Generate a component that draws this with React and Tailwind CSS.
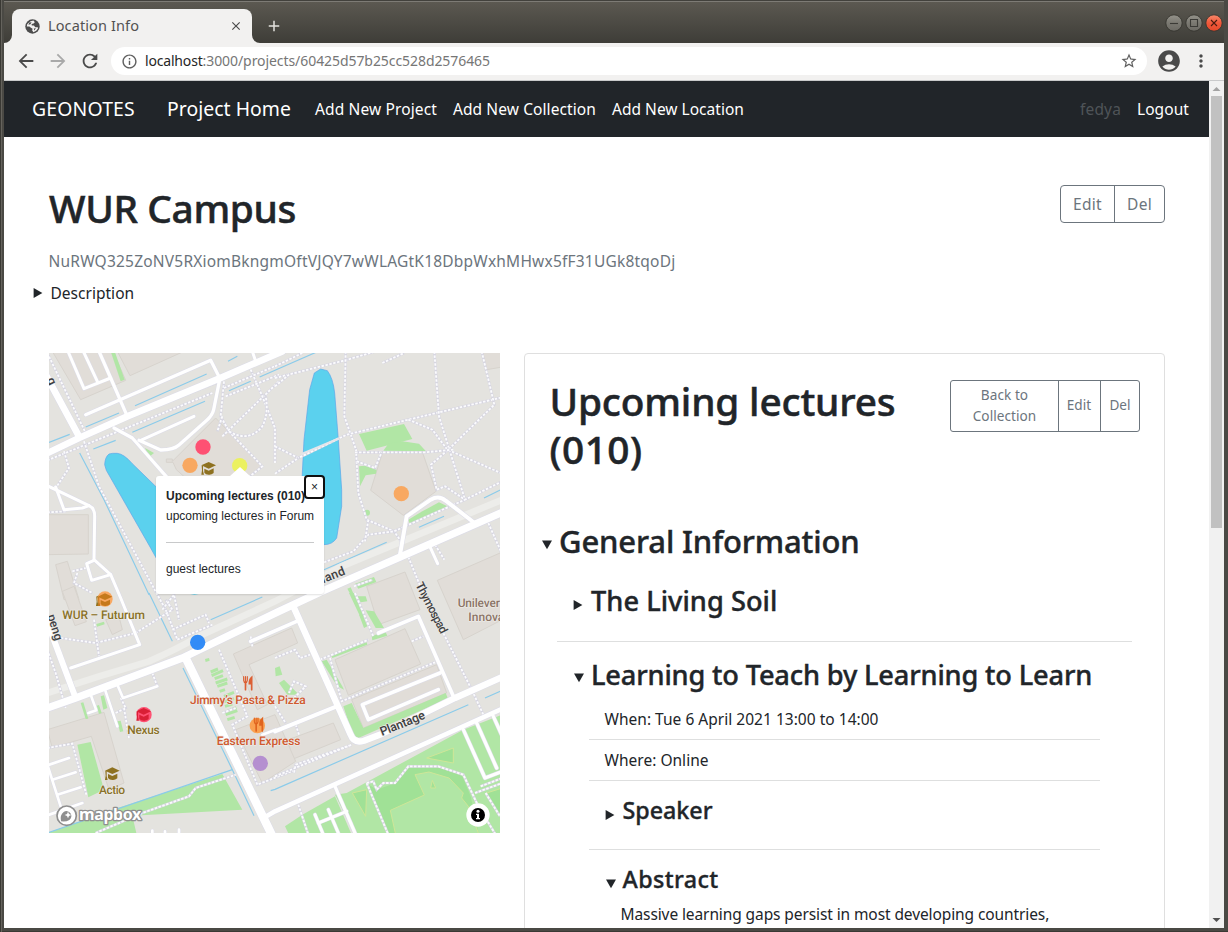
import React from 'react';
import {
  MdArrowBack, MdArrowForward, MdRefresh, MdInfoOutline, MdStarBorder,
  MdAccountCircle, MdMoreVert, MdClose, MdAdd,
} from 'react-icons/md';

/* Map data: three units per screen pixel. */
const BUILDINGS = [
  '10,-5 95,140 230,82 192,-5', '205,-5 243,68 405,-5', '370,325 500,195 640,340 600,375 410,375 382,350 372,328 352,328 352,318 370,318',
  '-5,485 118,485 118,603 -5,605', '20,635 55,625 90,740 45,740', '1000,300 1121,300 1161,415 1063,487 965,412',
  '1300,-5 1313,50 1360,42 1360,-5', '1165,682 1360,597 1360,800 1243,860', '858,920 1068,827 1115,933 898,1027',
  '953,700 1068,657 1113,770 988,815', '908,1040 1163,935 1193,1020 943,1125', '718,1160 853,1110 875,1160 728,1220',
  '553,903 728,825 746,870 600,935 655,1055 625,1070', '560,1130 678,1085 740,1225 640,1290',
  '-5,1130 165,1078 225,1290 180,1310 127,1150 75,1165 10,1185', '40,715 78,818 112,806 75,700', '170,800 210,790 220,830 190,845',
];
const GREENS = [
  '185,-5 197,-5 227,80 215,85', '288,285 315,300 300,312', '930,243 1065,213 1090,258 953,293',
  '1003,293 1018,272 1060,265 1110,272 1131,295', '930,340 948,338 983,350 981,362 950,367 933,400',
  '1078,500 1120,475 1170,448 1195,460 1083,514', '918,692 975,672 982,687 928,707', '895,707 905,703 915,725 905,725',
  '85,1175 125,1167 165,1310 118,1333', '185,1372 520,1263 580,1370 250,1388 262,1440 -5,1440',
  '893,1320 1243,1130 1360,1085 1360,1445 918,1445 858,1325', '708,1420 760,1385 858,1330 908,1445 720,1445',
  '818,925 833,920 880,1000 885,1010 865,1000', '845,905 953,868 955,875 850,915', '968,848 1010,838 1015,848 970,862',
  '883,1060 908,1050 943,1125 1190,1020 1197,1037 928,1155 912,1148', '900,720 915,720 945,790 938,800', '930,785 940,783 955,820 945,825',
  '950,772 975,775 1005,825 980,825', '925,730 950,730 955,745 935,748', '690,990 705,980 745,1020 738,1025 715,1025', '678,945 692,940 700,965 680,970',
  '155,1030 165,1027 175,1065 163,1070', '205,1105 215,1103 223,1135 213,1137', '95,1050 103,1048 118,1097 110,1098',
  '143,1058 150,1056 158,1080 150,1083', '142,813 165,806 167,814 144,821', '468,918 480,915 482,923 470,927',
];
const GREEN_DASHES = ['485,957 507,948', '488,968 522,953', '497,977 522,968', '500,990 535,978', '505,1000 535,990', '512,1015 528,1010', '525,1030 555,1018', '520,1048 555,1037', '528,1060 550,1053', '530,1085 565,1073', '535,1100 557,1093', '535,1075 562,1064'];
const STREAMS = [
  '0,268 62,244', '110,222 210,180', '133,288 200,262', '258,158 473,63', '250,238 468,145', '92,300 165,440 300,725', '300,720 370,865',
  '537,25 565,10', '540,113 605,85', '632,72 803,-3', '825,650 1013,568', '1110,523 1185,490', '1305,435 1360,408', '485,800 640,732',
  '402,945 550,1250 615,1388', '-5,1440 550,1250', '665,1313 678,1309 1258,1055', '1308,1035 1360,1012',
];
const PATHS = [
  'M-5 0L110 240', 'M-5 322L110 275L490 120', 'M180 215L500 90', 'M105 265L150 400L325 725L350 770L385 860', 'M45 295L60 345L25 398', 'M-5 478L50 475',
  'M525 85L515 190L540 235L640 340L600 372', 'M520 250L690 85', 'M605 50L640 130L678 225V330', 'M540 235Q600 270 640 220Q660 180 650 130',
  'M530 130L690 65', 'M525 105L700 30', 'M520 190L505 235', 'M678 75L888 22L980 -5', 'M678 100L720 65', 'M678 40L760 0', 'M1000 30L1065 0',
  'M890 -5L886 190L921 290L928 420L953 500L1035 535L1060 570', 'M678 280L748 315L893 245L1078 200L1360 133', 'M678 362L748 315',
  'M1078 200L1150 230L1195 290L1360 362', 'M1156 -5L1170 190L1248 440', 'M1298 -5L1336 155L1200 288L1146 335L1163 410L1188 400L1248 440L1360 385',
  'M918 298H1128L1213 290', 'M923 325L978 345L998 298', 'M825 628L913 595L958 545L1035 535L1248 440', 'M958 500L948 565', 'M1318 510L1360 605',
  'M1078 612L1118 710L1178 830L1268 1010L1303 1085', 'M1158 575L1186 620', 'M0 850L140 870L260 840L370 770L350 740', 'M135 800L150 910', 'M340 770L375 725L390 800',
  'M385 860L490 815', 'M370 830L470 785L480 810', 'M510 890L570 1030L595 1090L550 1115L625 1295L740 1250', 'M-5 1185L70 1172L112 1325',
  'M-5 890L20 960L50 1065', 'M200 1080L230 1065L215 1035', 'M225 1065L240 1155', 'M310 960L325 1000', 'M140 1440L280 1380L420 1330L440 1305L560 1265',
  'M678 915L738 890L753 915L783 905', 'M918 720L973 850', 'M813 920L958 860', 'M843 915L878 1045L1158 928', 'M1088 865L1123 850', 'M678 1270L908 1175L740 1235L735 1260',
  'M748 1355L778 1445', 'M953 1290L1018 1445', 'M953 1290L973 1285L983 1310L1003 1290L1038 1290L1078 1240L1168 1240L1243 1265L1288 1360L1340 1445',
  'M1278 1320L1360 1290', 'M1295 1300L1360 1275', 'M1310 1320L1353 1390', 'M735 1035L770 1000L735 985L720 1020', 'M678 1060L710 1110', 'M740 1115L750 1145', 'M915 700L970 680', 'M520 1080L560 1065', 'M605 850L610 880', 'M85 660L75 690L130 720', 'M70 655L110 645',
];
/* [path, width] */
const ROADS = [
  ['M-10 303L90 255L235 190L510 77L700 -5', 20], ['M-10 65L90 250', 20], ['M150 -5L185 75L235 190', 10], ['M110 185L485 22L512 75', 10],
  ['M57 -5L105 107L185 75', 9], ['M103 -5L145 85', 9], ['M512 80L494 170Q490 188 470 205L390 276Q375 290 335 291L270 262', 10], ['M195 225L250 255L360 380', 10],
  ['M275 262L435 190', 9], ['M-5 398L120 458Q137 465 137 490L135 620L185 665L215 735L272 875L65 945', 9], ['M20 402L45 470L100 465L120 458', 9],
  ['M185 665L128 682L113 632L135 622', 9], ['M610 -5L620 25', 9], ['M-10 1067L80 1035L400 915L690 775L825 712L1360 478', 22], ['M-10 795L80 1035', 18],
  ['M410 915L668 1445', 25], ['M125 1025L142 1072L118 1080', 8], ['M168 1010L205 1120', 8], ['M205 995L222 1035L325 1000', 8],
  ['M-5 1235L35 1360', 8], ['M-5 1237L60 1215', 8], ['M10 1280L80 1258', 8], ['M25 1325L95 1303', 8], ['M-5 1387L100 1350', 8],
  ['M733 760L905 1145Q915 1172 945 1163L1000 1142L1218 1035L1360 972', 19], ['M605 865L743 805', 11], ['M988 840L1108 790L1213 1030', 11],
  ['M1173 960L940 1055L958 1100L1168 1010', 11], ['M678 1135L863 1060', 12], ['M655 1388L678 1375L1360 1067', 14], ['M858 1300L920 1445', 10],
  ['M798 1385L823 1445', 9], ['M838 1370L868 1440', 9], ['M808 1410L893 1375', 9], ['M1243 1130L1308 1275L1360 1255', 10],
  ['M1283 1110L1343 1245', 10], ['M1333 1090L1360 1150', 10], ['M1053 605L1073 490L1145 440Q1170 426 1190 443L1273 507', 12], ['M1140 575L1166 632', 9],
  ['M310 1433V1445M348 1435V1445M390 1430V1445', 8], ['M640 1145L680 1130', 8],
];
const DOTS = [
  [462, 282, '#ff4c6f'], [423, 337, '#f9a65d'], [572, 338, '#ebf25c'], [1057, 422, '#f9a65d'], [446, 868, '#2b88f7'],
  [285, 1085, '#ff4c6f'], [625, 1118, '#fb9f4c'], [634, 1231, '#b48ccf'], [168, 738, '#f9a65d'],
];

function Cap({ x, y, fill = '#8e7120' }) {
  return (
    <g transform={`translate(${x} ${y})`} fill={fill}>
      <path d="M-22 -9L0 -19L22 -9L0 1Z" />
      <path d="M-13 1L0 7L15 0V14Q8 20 0 19Q-9 19 -13 13Z" />
      <path d="M-21 -8H-17V8L-14 19H-22L-20 6Z" />
    </g>
  );
}

function Fork({ x, y, stroke = '#dc5f33' }) {
  return (
    <g transform={`translate(${x} ${y})`} fill="none" stroke={stroke} strokeLinecap="round">
      <path d="M-13 -20V-9Q-12 -2 -8 -2Q-3 -2 -2 -9V-20M-7.5 -20V-4" strokeWidth="3.5" />
      <path d="M-7.5 -2V19" strokeWidth="5" />
      <path d="M11 19V-18Q4 -12 4 1H11" strokeWidth="5" fill={stroke} />
    </g>
  );
}

function MapText({ children, fill, size = 36, ...rest }) {
  return (
    <text fill={fill} fontSize={size} stroke="#eceae6" strokeWidth="4" strokeLinejoin="round" paintOrder="stroke" textRendering="geometricPrecision" {...rest}>
      {children}
    </text>
  );
}

function CampusMap() {
  return (
    <svg className="block h-[480px] w-[451px] font-['Roboto',sans-serif] font-medium" viewBox="0 0 1353 1440">
      <rect width="1353" height="1440" fill="#e4e3df" />
      {BUILDINGS.map((p) => <polygon key={p} points={p} fill="#e1ddd8" stroke="#d7d3cd" strokeWidth="3" />)}
      {GREENS.map((p) => <polygon key={p} points={p} fill="#b1e6a5" />)}
      <circle cx="954" cy="479" r="9" fill="#b1e6a5" />
      {GREEN_DASHES.map((p) => <polyline key={p} points={p} stroke="#b1e6a5" strokeWidth="9" />)}
      <path d="M960 1295L983 1310L1040 1290L1080 1245L1170 1240L1240 1270L1265 1330L1290 1445H1015Z" fill="#a0e196" />
      <path d="M1098 1265L1140 1257L1200 1275L1243 1320L1238 1335L1258 1360L1290 1445H1040L1024 1372L1126 1326Z" fill="#b1e6a5" stroke="#cfe698" strokeWidth="3" />
      <path d="M1133 1215L1213 1185V1230Z M910 1320L953 1310L950 1390Z M1145 1305L1150 1282L1160 1305Z M1313 1320L1360 1305V1380H1345Z" fill="#a0e196" stroke="#cfe698" strokeWidth="3" />
      {STREAMS.map((p) => <polyline key={p} points={p} fill="none" stroke="#8acbea" strokeWidth="3.5" />)}
      <path d="M167 335Q168 312 180 303Q190 300 205 301Q225 303 250 332L325 405L400 490L450 720H380L305 585L172 352Z" fill="#5bd1ee" stroke="#5aa5ea" strokeWidth="2" />
      <path d="M796 60L815 48L835 53Q852 75 857 120L868 260L878 410V460L863 555Q850 575 825 575H770L758 400L765 260L782 110Z" fill="#5bd1ee" stroke="#5aa5ea" strokeWidth="2" />
      <path d="M410 715Q435 735 465 715Z" fill="#5bd1ee" />
      <path d="M-5 1020L150 970L300 925Q380 890 450 850L678 745L878 640L1360 440" fill="none" stroke="#ededea" strokeWidth="20" />
      {PATHS.map((p) => (
        <g key={p} fill="none">
          <path d={p} stroke="#d7d6e1" strokeWidth="8" />
          <path d={p} stroke="#fbfbfd" strokeWidth="5.5" strokeDasharray="7.500 4.500" />
        </g>
      ))}
      <path d="M758 303L868 257" stroke="#e5e5ea" strokeWidth="6" />
      {ROADS.map(([p, w]) => <path key={p} d={p} fill="none" stroke="#dcdce8" strokeWidth={w + 3} strokeLinecap="round" strokeLinejoin="round" />)}
      {ROADS.map(([p, w]) => <path key={`${p}f`} d={p} fill="none" stroke="#fff" strokeWidth={w} strokeLinecap="round" strokeLinejoin="round" />)}

      <Cap x={479} y={346} />
      <Cap x={163} y={740} />
      <Cap x={190} y={1262} />
      <Fork x={597} y={991} />
      {DOTS.map(([x, y, c]) => <circle key={`${x}-${y}`} cx={x} cy={y} r="23" fill={c} fillOpacity="0.97" />)}
      <Cap x={168} y={740} fill="#c5791c" />
      <Cap x={284} y={1084} fill="#d91f36" />
      <Fork x={629} y={1115} stroke="#e0641f" />

      <MapText x="40" y="798" fill="#8a7228" textLength="248">WUR – Futurum</MapText>
      <MapText x="235" y="1143" fill="#8a7228" textLength="97">Nexus</MapText>
      <MapText x="150" y="1322" fill="#8a7228" textLength="78">Actio</MapText>
      <MapText x="423" y="1054" fill="#d0592f" textLength="347">Jimmy’s Pasta &amp; Pizza</MapText>
      <MapText x="503" y="1176" fill="#d0592f" textLength="251">Eastern Express</MapText>
      <MapText x="1226" y="761" fill="#8b7466" textLength="127">Unilever</MapText>
      <MapText x="1258" y="804" fill="#8b7466" textLength="108">Innova</MapText>
      <g fill="#3f3f42">
        <MapText fill="#3f3f42" size={37} textLength="142" transform="translate(999 1149) rotate(-22)">Plantage</MapText>
        <MapText fill="#3f3f42" textLength="168" transform="translate(1099 695) rotate(63)">Thymospad</MapText>
        <MapText fill="#3f3f42" size={37} textLength="73" transform="translate(823 691) rotate(-22)">land</MapText>
        <MapText fill="#3f3f42" transform="translate(-5 788) rotate(73)">peng</MapText>
        <MapText fill="#3f3f42" transform="translate(-7 80) rotate(64)">g</MapText>
      </g>

      <g transform="translate(53 1388)">
        <circle r="29" fill="#fff" stroke="#8f8f8f" strokeWidth="5" />
        <path d="M-17 17Q-21 -2 -9 -11A14.500 14.500 0 1 1 8 13Q-2 19 -17 17Z" fill="#8f8f8f" />
        <path d="M4 -12L7 -5L14 -2L7 1L4 8L1 1L-6 -2L1 -5Z" fill="#fff" />
      </g>
      <text x="90" y="1402" fontSize="48" textLength="187" className="font-['Noto_Sans',sans-serif] font-bold" fill="#fff" stroke="#8f8f8f" strokeWidth="8" strokeLinejoin="round" paintOrder="stroke">mapbox</text>
      <circle cx="1287" cy="1386" r="35" fill="#fff" />
      <circle cx="1287" cy="1386" r="21" fill="#000" />
      <circle cx="1287" cy="1375" r="4.5" fill="#fff" />
      <path d="M1281 1382H1290V1395H1293V1399H1281V1395H1284V1386H1281Z" fill="#fff" />
    </svg>
  );
}

function Popup() {
  return (
    <div className="absolute top-[114px] left-[107px] w-[168px] font-['Liberation_Sans',Arial,sans-serif] text-[12px] leading-5 text-[#212529]">
      <svg className="mx-auto block h-[9px] w-5" viewBox="0 0 20 9"><path d="M10 0L20 9H0Z" fill="#fff" /></svg>
      <div className="h-[118px] rounded-[3px] bg-white px-[10px] pt-[10px] shadow-[0_1px_2px_rgba(0,0,0,0.12)]">
        <div className="font-bold whitespace-nowrap tracking-[-0.02px]">Upcoming lectures (010)</div>
        <div className="whitespace-nowrap">upcoming lectures in Forum</div>
        <div className="my-4 h-px bg-[#c8c9ca]" />
        <div>guest lectures</div>
      </div>
      <button className="absolute top-[8px] right-[-1px] flex h-6 w-[21px] items-center justify-center rounded-[4px] border-2 border-[#101010] bg-white text-[12px] leading-none">×</button>
    </div>
  );
}

function Caret({ open, className = '' }) {
  return (
    <svg className={`h-[10px] w-[10px] shrink-0 ${className}`} viewBox="0 0 10 10">
      <path d={open ? 'M0 0.5H10L5 9.3Z' : 'M0.6 0V10L9.4 5Z'} fill="#212529" />
    </svg>
  );
}

function WindowButton({ kind }) {
  const close = kind === 'close';
  return (
    <svg className="h-[18px] w-[18px]" viewBox="0 0 18 18">
      <defs>
        <linearGradient id={`wb-${kind}`} x1="0" y1="0" x2="0" y2="1">
          <stop offset="0" stopColor={close ? '#f8896b' : '#94928a'} />
          <stop offset="0.5" stopColor={close ? '#f0583a' : '#7b7972'} />
          <stop offset="1" stopColor={close ? '#e4492a' : '#6b6963'} />
        </linearGradient>
      </defs>
      <circle cx="9" cy="9" r="8.2" fill={`url(#wb-${kind})`} stroke="#35342f" strokeWidth="0.9" />
      <path
        d={kind === 'min' ? 'M5 9.5H13' : kind === 'max' ? 'M5.5 5.5H12.5V12.5H5.5Z' : 'M6 6L12 12M12 6L6 12'}
        fill="none" stroke={close ? '#4a1c10' : '#3b3a36'} strokeWidth="1.1"
      />
    </svg>
  );
}

function Globe() {
  return (
    <svg className="h-[15px] w-[15px]" viewBox="0 0 15 15">
      <circle cx="7.5" cy="7.5" r="7.2" fill="#4c4c4c" />
      <path d="M5.5 2.2L8.5 1.6L9.8 3.2L8.6 4.6L6.6 5L6.8 6.4H9L10.2 8.2H12.8L13 9.4L11.2 11.8L8.4 13.2L7.2 11.5L7.6 9.8L5.6 8.6L4.4 7.6H1.8L2.2 5.2Z" fill="#f2f1f0" />
      <path d="M4.2 3.6L6.6 3.2L5.4 5.2L3.4 5.8Z M8.8 9.6L11 9.2L9.2 11.6Z" fill="#4c4c4c" />
    </svg>
  );
}

function Browser() {
  return (
    <>
      <div className="flex h-[43px] items-end bg-linear-to-b from-[#5d5a52] to-[#3e3d38] shadow-[inset_0_1px_0_#42413c,inset_0_2px_0_#7d7b75]">
        <svg className="h-2 w-2" viewBox="0 0 8 8"><path d="M0 8A8 8 0 0 0 8 0V8Z" fill="#f2f1f0" /></svg>
        <div className="flex h-[34px] w-[240px] items-center rounded-t-lg bg-[#f2f1f0] pr-[9px] pl-[13px] text-[#4a4a4a]">
          <Globe />
          <span className="ml-2 flex-1 pb-[2px] text-[14.5px] leading-8 tracking-[0.11px] text-[#525252]">Location Info</span>
          <MdClose className="h-[14px] w-[14px]" />
        </div>
        <svg className="h-2 w-2" viewBox="0 0 8 8"><path d="M8 8A8 8 0 0 1 0 0V8Z" fill="#f2f1f0" /></svg>
        <MdAdd className="mb-2 ml-[5px] h-[18px] w-[18px] self-end text-[#e4e2de]" />
        <div className="mr-[1px] mb-[11px] ml-auto flex gap-[2px]">
          <WindowButton kind="min" />
          <WindowButton kind="max" />
          <WindowButton kind="close" />
        </div>
      </div>
      <div className="flex h-[38px] items-center border-b border-[#c9cacb] bg-[#f2f1f0] pr-[11px] pb-[1px] pl-[11px] text-[#4a4a4a]">
        <MdArrowBack className="h-[22px] w-[22px]" />
        <MdArrowForward className="ml-[10px] h-[22px] w-[22px] text-[#a9a9a9]" />
        <MdRefresh className="ml-[10px] h-[22px] w-[22px]" />
        <div className="ml-[10px] flex h-7 w-[1036px] items-center rounded-full bg-white pr-[9px] pl-[10px] text-[14px] whitespace-nowrap">
          <MdInfoOutline className="h-[17px] w-[17px] text-[#5f5f5f]" />
          <span className="ml-[7px] pb-px tracking-[-0.18px] text-[#262626]">localhost</span>
          <span className="flex-1 pb-px tracking-[-0.07px] text-[#767676]">:3000/projects/60425d57b25cc528d2576465</span>
          <MdStarBorder className="h-[18px] w-[18px] text-[#5f5f5f]" />
        </div>
        <MdAccountCircle className="ml-[9px] h-[26px] w-[26px]" />
        <MdMoreVert className="ml-[9px] h-5 w-5" />
      </div>
    </>
  );
}

function Navbar() {
  return (
    <nav className="flex h-14 items-center bg-[#212529] pr-5 pl-7 text-[15.5px] whitespace-nowrap text-white">
      <span className="w-[135px] text-[19.4px] tracking-[0.16px]">GEONOTES</span>
      <span className="w-[148px] text-[19.4px] tracking-[0.04px]">Project Home</span>
      <span className="w-[138px] pt-[2px] tracking-[0.13px]">Add New Project</span>
      <span className="w-[159px] pt-[2px] tracking-[0.09px]">Add New Collection</span>
      <span className="flex-1 pt-[2px] tracking-[0.02px]">Add New Location</span>
      <span className="w-[57px] pt-[2px] tracking-[0.16px] text-[#4f5458]">fedya</span>
      <span className="pt-[2px] tracking-[0.07px]">Logout</span>
    </nav>
  );
}

function ProjectHeader() {
  return (
    <header>
      <div className="flex items-start justify-between pt-12 pr-[44px] pl-[45px]">
        <h1 className="text-[38.8px] leading-[46px] font-medium tracking-[-0.36px] [-webkit-text-stroke:0.5px_#212529]">WUR Campus</h1>
        <div className="flex h-[38px] divide-x divide-[#6c757d] rounded-[4px] border border-[#6c757d] text-[15.5px] leading-9 tracking-[0.31px] text-[#6c757d]">
          <button className="w-[54px]">Edit</button>
          <button className="w-[49px]">Del</button>
        </div>
      </div>
      <p className="mt-[18px] pl-[44.5px] text-[15.5px] leading-6 tracking-[0.21px] text-[#6c757d]">NuRWQ325ZoNV5RXiomBkngmOftVJQY7wWLAGtK18DbpWxhMHwx5fF31UGk8tqoDj</p>
      <div className="mt-2 flex items-center gap-[8px] pl-[28.5px] text-[15.5px] leading-6 tracking-[0.02px]">
        <Caret /><span>Description</span>
      </div>
    </header>
  );
}

function LocationCard() {
  return (
    <section className="h-[700px] w-[641px] rounded-[4px] border border-[#dfdfdf] whitespace-nowrap">
      <div className="flex items-start justify-between pt-[23px] pr-6 pl-6">
        <h1 className="w-[360px] pl-[0.5px] text-[38.8px] leading-[48px] font-medium tracking-[-0.17px] whitespace-normal [-webkit-text-stroke:0.5px_#212529]">
          Upcoming lectures <span className="tracking-[0.44px]">(010)</span>
        </h1>
        <div className="mt-[3px] flex h-[52px] divide-x divide-[#6c757d] rounded-[3px] border border-[#6c757d] text-[13.6px] leading-[21px] tracking-[0.05px] text-[#6c757d]">
          <button className="w-[108px] pb-[2px]">Back to<br />Collection</button>
          <button className="w-[42px] pr-px pb-[3px]">Edit</button>
          <button className="w-[38px] pb-[3px]">Del</button>
        </div>
      </div>
      <div className="mt-[49px] flex h-[38px] items-center pl-[17px]">
        <Caret open className="mt-[7px] mr-[7px]" />
        <h2 className="text-[31px] leading-[38px] font-medium tracking-[-0.15px] [-webkit-text-stroke:0.4px_#212529]">General Information</h2>
      </div>
      <div className="mr-8 ml-8">
        <div className="mt-6 flex h-[34px] items-center pl-4">
          <Caret className="mt-[7px] mr-[8px]" />
          <h3 className="text-[27.2px] leading-[34px] font-medium tracking-[0.04px] [-webkit-text-stroke:0.4px_#212529]">The Living Soil</h3>
        </div>
        <div className="mt-[23px] h-px bg-[#dedfdf]" />
        <div className="mt-4 flex h-[33px] items-center pl-[17px]">
          <Caret open className="mt-[7px] mr-[7px]" />
          <h3 className="text-[27.2px] leading-[33px] font-medium tracking-[-0.16px] [-webkit-text-stroke:0.4px_#212529]">Learning to Teach by Learning to Learn</h3>
        </div>
        <div className="mx-8 text-[15.5px] leading-6">
          <div className="border-b border-[#dedfdf] pt-4 pb-2 pl-[15.5px] tracking-[0.02px]">When: Tue 6 April 2021 13:00 to 14:00</div>
          <div className="border-b border-[#dedfdf] py-2 pl-[15.5px] tracking-[0.02px]">Where: Online</div>
          <div className="flex h-[69px] items-start border-b border-[#dedfdf] pt-[15px] pl-4">
            <Caret className="mt-[14px] mr-[7.5px]" />
            <h4 className="text-[23.3px] leading-[28px] font-medium tracking-[-0.03px] [-webkit-text-stroke:0.35px_#212529]">Speaker</h4>
          </div>
          <div className="flex items-start pt-[15px] pl-[17px]">
            <Caret open className="mt-[14px] mr-[6.5px]" />
            <h4 className="text-[23.3px] leading-[28px] font-medium tracking-[0.37px] [-webkit-text-stroke:0.35px_#212529]">Abstract</h4>
          </div>
          <p className="mt-[9px] pl-[31.5px] tracking-[-0.1px]">Massive learning gaps persist in most developing countries,</p>
        </div>
      </div>
    </section>
  );
}

function Scrollbar() {
  return (
    <div className="flex w-[15px] shrink-0 flex-col items-center bg-[#f1f1f1]">
      <svg className="h-[15px] w-[15px]" viewBox="0 0 15 15"><path d="M3.5 10H11.5L7.5 6Z" fill="#a3a3a3" /></svg>
      <div className="h-[432px] w-[11px] bg-[#c1c1c1]" />
      <svg className="mt-auto h-[15px] w-[15px]" viewBox="0 0 15 15"><path d="M3.5 5H11.5L7.5 9Z" fill="#505050" /></svg>
    </div>
  );
}

export default function App() {
  return (
    <div className="flex h-[932px] w-[1228px] flex-col overflow-hidden bg-[#4a4944] px-1 pb-1 font-['Noto_Sans',sans-serif] text-[#212529] shadow-[inset_1px_0_0_#3a3934,inset_2px_0_0_#65635d,inset_0_-1px_0_#3a3934]">
      <Browser />
      <div className="flex min-h-0 flex-1 bg-white">
        <main className="w-[1205px] overflow-hidden">
          <Navbar />
          <ProjectHeader />
          <div className="mt-12 flex gap-6 pl-[45px]">
            <div className="relative h-[480px] w-[451px] overflow-hidden">
              <CampusMap />
              <Popup />
            </div>
            <LocationCard />
          </div>
        </main>
        <Scrollbar />
      </div>
    </div>
  );
}
